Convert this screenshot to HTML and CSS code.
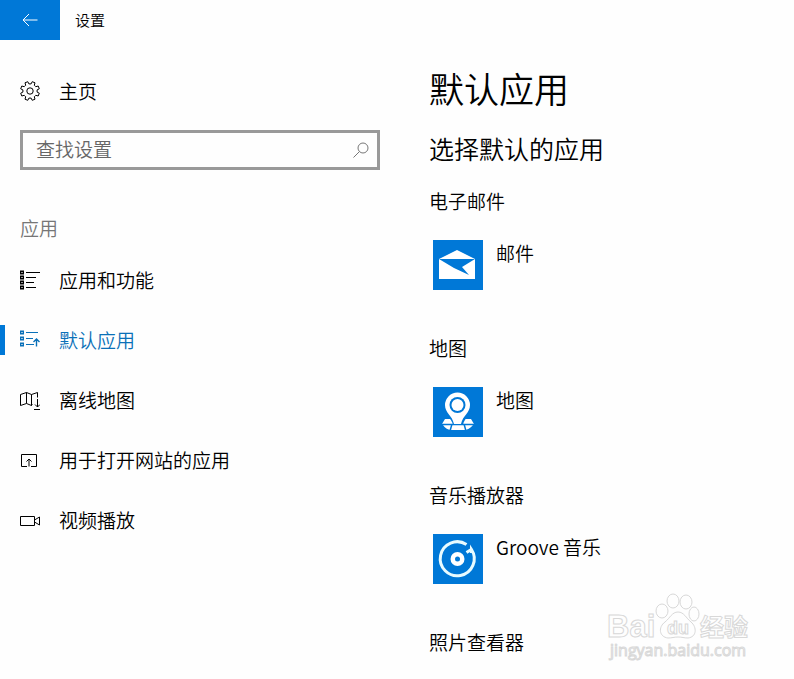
FILE: index.html
```html
<!DOCTYPE html>
<html lang="zh-CN">

<head>
  <meta charset="UTF-8">
  <meta name="viewport" content="width=device-width, initial-scale=1.0">
  <title>设置</title>
  <link rel="stylesheet" href="styles.css">
</head>

<body>
  <header class="titlebar">
    <button class="back-button" type="button" aria-label="返回">
      <svg width="16" height="14" viewBox="0 0 16 14"><path d="M15.5 7H1M7 1L1 7l6 6"/></svg>
    </button>
    <span class="window-title">设置</span>
  </header>

  <div class="layout">
    <aside class="sidebar">
      <a class="nav-link" href="#">
        <svg class="icon" viewBox="0 0 20 20">
          <path d="M11.1 2.9L12.2.7 15 1.8 14.300 4.200 15.800 5.700 18.200 5 19.300 7.800 17.100 8.900V11.100L19.300 12.200 18.200 15 15.800 14.300 14.300 15.800 15 18.200 12.200 19.300 11.100 17.100H8.900L7.800 19.300 5 18.200 5.700 15.800 4.200 14.300 1.800 15 .7 12.200 2.900 11.100V8.900L.7 7.800 1.800 5 4.200 5.700 5.700 4.200 5 1.800 7.800.7 8.900 2.900z"/>
          <circle cx="10" cy="10" r="3.200"/>
        </svg>
        主页
      </a>

      <form class="search">
        <input class="search-input" type="text" placeholder="查找设置" aria-label="查找设置">
        <button class="search-button" type="button" aria-label="搜索">
          <svg width="16" height="16" viewBox="0 0 16 16"><circle cx="10" cy="6" r="5"/><path d="M6.500 9.500L.5 15.500"/></svg>
        </button>
      </form>

      <h2 class="nav-title">应用</h2>
      <nav class="nav">
        <a class="nav-link" href="#">
          <svg class="icon" viewBox="0 0 20 20">
            <path d="M6 2.500h14M6 7.500h10M6 12.500h8M6 17.500h10"/>
            <path class="bullets" d="M.7 1.200h2.600v2.600H.7zM.7 6.200h2.600v2.600H.7zM.7 11.200h2.600v2.600H.7zM.7 16.200h2.600v2.600H.7z"/>
          </svg>
          应用和功能
        </a>
        <a class="nav-link active" href="#">
          <svg class="icon" viewBox="0 0 20 20">
            <path d="M6 2.500h12M6 8.500h7M6 14.500h8"/>
            <path class="bullets" d="M.7 1.200h2.600v2.600H.7zM.7 7.200h2.600v2.600H.7zM.7 13.200h2.600v2.600H.7zM16.500 16.500V9M13.500 12l3-3 3 3"/>
          </svg>
          默认应用
        </a>
        <a class="nav-link" href="#">
          <svg class="icon" viewBox="0 0 20 20">
            <path d="M12.500 14.500l-1 1-5-2-6 2v-11l6-2 5 2 6-2v5M6.500 2.500v11M11.500 4.500v11M17.500 9v8M15 14.500l2.500 2.500 2.500-2.500M14 19.500h6"/>
          </svg>
          离线地图
        </a>
        <a class="nav-link" href="#">
          <svg class="icon" viewBox="0 0 20 20">
            <path d="M7 16.500H1.500v-12h15v12H11M9 16.500V9M6.500 11.500L9 9l2.500 2.500"/>
          </svg>
          用于打开网站的应用
        </a>
        <a class="nav-link" href="#">
          <svg class="icon" viewBox="0 0 20 20">
            <path d="M.5 6.500h14v9H.5zM14.500 10l5-3v8l-5-3"/>
          </svg>
          视频播放
        </a>
      </nav>
    </aside>

    <main class="content">
      <h1 class="page-title">默认应用</h1>
      <h2 class="section-title">选择默认的应用</h2>

      <section class="group">
        <h3 class="group-title">电子邮件</h3>
        <button class="app" type="button">
          <svg class="tile" viewBox="0 0 50 50">
            <path class="fill" d="M6 19L24 10l18 9v20H6z"/>
            <path class="cut" d="M6 19h36L29 27l7 8L21 28z"/>
          </svg>
          <span class="app-name">邮件</span>
        </button>
      </section>

      <section class="group">
        <h3 class="group-title">地图</h3>
        <button class="app" type="button">
          <svg class="tile" viewBox="0 0 50 50">
            <path class="fill" d="M12 32h26l3 5H9zM10 38h30q-4 5-9 5H19q-6 0-9-5z"/>
            <path class="gap" d="M9 37.500h32M19 37l-2 7M31 37l2 7"/>
            <path class="cut" d="M10 18a14.500 14.500 0 0 1 29 0c0 9-8 13-9 20H20c-1-7-10-11-10-20z"/>
            <path class="fill" d="M12 18a12.500 12.500 0 0 1 25 0c0 8-7 10-9 19h-7c-2-9-9-11-9-19z"/>
            <circle class="cut" cx="24.500" cy="18" r="8"/>
            <circle class="fill" cx="24.500" cy="18" r="6"/>
          </svg>
          <span class="app-name">地图</span>
        </button>
      </section>

      <section class="group">
        <h3 class="group-title">音乐播放器</h3>
        <button class="app" type="button">
          <svg class="tile" viewBox="0 0 50 50">
            <path class="ring" d="M33.500 10.500A17 17 0 1 0 38.500 15.500V19M33.500 18.500l5.500-3.500"/>
            <circle class="fill" cx="24.500" cy="25" r="7"/>
            <circle class="cut" cx="24.500" cy="25" r="2.500"/>
          </svg>
          <span class="app-name">Groove 音乐</span>
        </button>
      </section>

      <section class="group">
        <h3 class="group-title">照片查看器</h3>
      </section>
    </main>
  </div>

  <svg class="watermark" width="144" height="74" viewBox="0 0 144 74">
    <text class="mark" x="0" y="46" font-size="31">Bai</text>
    <g class="paw">
      <ellipse cx="55" cy="20" rx="6" ry="7"/>
      <ellipse cx="66" cy="10" rx="6" ry="7"/>
      <ellipse cx="79" cy="11" rx="6" ry="7"/>
      <ellipse cx="87" cy="23" rx="5" ry="7"/>
      <path d="M71 21c6 0 8 6 13 10 6 5 6 15-3 16-4 0-6-1-10-1s-6 1-10 1c-9-1-10-11-3-16 5-4 7-10 13-10z"/>
    </g>
    <text class="mark" x="60" y="43" font-size="18">du</text>
    <text class="mark" x="93" y="45" font-size="24">经验</text>
    <text class="url" x="3" y="65" font-size="16">jingyan.baidu.com</text>
  </svg>
</body>

</html>
```

FILE: styles.css
```css
body {
  margin: 0;
  background-color: #fefefe;
  color: #000;
  font-family: "Noto Sans CJK SC", "Open Sans", sans-serif;
  font-weight: 350;
  font-size: 19px;
  line-height: 28px;
}

h1, h2, h3 {
  margin: 0;
  font-weight: inherit;
}

button, input {
  font: inherit;
  color: inherit;
}

svg {
  flex: none;
  fill: none;
  stroke: currentColor;
}

/* Title bar */
.titlebar {
  display: flex;
  align-items: center;
  height: 40px;
}

.back-button {
  display: flex;
  align-items: center;
  justify-content: center;
  width: 60px;
  height: 40px;
  padding: 0;
  border: none;
  background-color: #0078d7;
  color: #fff;
}

.window-title {
  margin-left: 15px;
  font-size: 15px;
}

.layout {
  display: flex;
  gap: 49px;
}

/* Sidebar */
.sidebar {
  flex: none;
  width: 380px;
  padding-top: 21px;
}

.nav-link {
  display: flex;
  align-items: center;
  gap: 19px;
  height: 60px;
  padding-left: 20px;
  color: #000;
  text-decoration: none;
}

.icon {
  width: 20px;
  height: 20px;
}

.bullets {
  stroke-width: 1.400;
}

.active {
  padding-left: 15px;
  color: #0a70b8;
}

.active::before {
  content: "";
  width: 5px;
  height: 30px;
  margin-left: -15px;
  margin-right: -4px;
  background-color: #0078d7;
}

.search {
  display: flex;
  align-items: center;
  box-sizing: border-box;
  height: 40px;
  margin: 9px 0 0 20px;
  border: 3px solid #999;
}

.search-input {
  flex: 1;
  min-width: 0;
  padding: 0 0 2px 13px;
  border: none;
  outline: none;
  background: none;
}

.search-input::placeholder {
  color: #666;
}

.search-button {
  display: flex;
  padding: 0 8px;
  border: none;
  background: none;
  color: #777;
}

.nav-title {
  margin: 44px 0 8px 20px;
  color: #767676;
  font-size: 19px;
}

/* Content */
.content {
  flex: 1;
  min-width: 0;
  padding-top: 23px;
}

.page-title {
  font-size: 35px;
  line-height: 50px;
}

.section-title {
  margin: 15px 0 19px;
  font-size: 25px;
  line-height: 40px;
}

.group {
  margin-bottom: 44px;
}

.group:last-child {
  margin-bottom: 0;
}

.group-title {
  margin-bottom: 25px;
  font-size: 19px;
}

.app {
  display: flex;
  gap: 13px;
  padding: 0 0 0 4px;
  border: none;
  background: none;
  text-align: left;
}

.app-name {
  line-height: 26px;
}

.tile {
  width: 50px;
  height: 50px;
  background-color: #0078d7;
  stroke: none;
}

.fill {
  fill: #fff;
}

.cut {
  fill: #0078d7;
}

.gap {
  stroke: #0078d7;
  stroke-width: 1.5;
}

.ring {
  stroke: #e8fbff;
  stroke-width: 3;
}

/* Watermark */
.watermark {
  position: absolute;
  right: 43px;
  top: 591px;
  stroke: #d8d8d8;
  fill: #fefefe;
  pointer-events: none;
}

.mark {
  font-family: "Liberation Sans", "Noto Sans CJK SC", sans-serif;
  font-weight: 700;
}

.url {
  font-family: "Open Sans", sans-serif;
  font-weight: 400;
}
```
